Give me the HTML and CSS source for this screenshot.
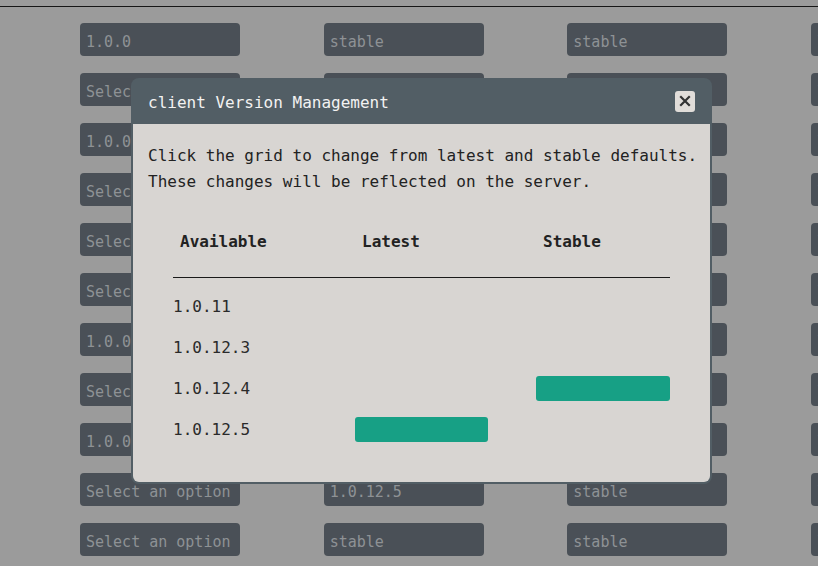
FILE: index.html
```html
<!DOCTYPE html>
<html lang="en">
<head>
<meta charset="utf-8">
<title>client Version Management</title>
<link rel="stylesheet" href="styles.css">
</head>
<body>
<div class="topbar"></div>
<div class="fields">
  <div class="field">1.0.0</div><div class="field">stable</div><div class="field">stable</div><div class="field">latest</div>
  <div class="field">Select an option</div><div class="field">latest</div><div class="field">stable</div><div class="field">latest</div>
  <div class="field">1.0.0</div><div class="field">stable</div><div class="field">stable</div><div class="field">latest</div>
  <div class="field">Select an option</div><div class="field">latest</div><div class="field">stable</div><div class="field">latest</div>
  <div class="field">Select an option</div><div class="field">latest</div><div class="field">stable</div><div class="field">latest</div>
  <div class="field">Select an option</div><div class="field">latest</div><div class="field">stable</div><div class="field">latest</div>
  <div class="field">1.0.0</div><div class="field">stable</div><div class="field">stable</div><div class="field">latest</div>
  <div class="field">Select an option</div><div class="field">latest</div><div class="field">stable</div><div class="field">latest</div>
  <div class="field">1.0.0</div><div class="field">stable</div><div class="field">stable</div><div class="field">latest</div>
  <div class="field">Select an option</div><div class="field">1.0.12.5</div><div class="field">stable</div><div class="field">latest</div>
  <div class="field">Select an option</div><div class="field">stable</div><div class="field">stable</div><div class="field">latest</div>
</div>

<div class="modal">
  <div class="modal-header">
    <span class="modal-title">client Version Management</span>
    <button class="close" aria-label="Close">
      <svg width="12" height="12" viewBox="0 0 12 12"><path d="M2 2 L10 10 M10 2 L2 10" stroke="#333" stroke-width="2.2" stroke-linecap="square"/></svg>
    </button>
  </div>
  <div class="modal-body">
    <p class="intro">Click the grid to change from latest and stable defaults.<br>These changes will be reflected on the server.</p>
    <div class="vtable">
      <div class="th">Available</div><div class="th">Latest</div><div class="th">Stable</div>
      <div class="rows">
        <div class="td">1.0.11</div><div class="td"></div><div class="td"></div>
        <div class="td">1.0.12.3</div><div class="td"></div><div class="td"></div>
        <div class="td">1.0.12.4</div><div class="td"></div><div class="td"><span class="bar bar-wide"></span></div>
        <div class="td">1.0.12.5</div><div class="td"><span class="bar"></span></div><div class="td"></div>
      </div>
    </div>
  </div>
</div>
</body>
</html>
```
FILE: styles.css
```css
html, body {
  margin: 0;
  padding: 0;
}
body {
  background: #9b9b9b;
  width: 818px;
  height: 566px;
  overflow: hidden;
  font-family: "DejaVu Sans Mono", "Liberation Mono", monospace;
}
.topbar {
  height: 6px;
  border-bottom: 1px solid #161616;
}
.fields {
  display: grid;
  grid-template-columns: repeat(4, 160px);
  column-gap: 83.67px;
  row-gap: 17px;
  padding: 16px 0 0 80px;
  width: 738px;
  overflow: hidden;
}
.field {
  height: 33px;
  background: #4a5057;
  border-radius: 4px;
  color: #8e9295;
  font-size: 15px;
  line-height: 38px;
  padding-left: 6px;
  white-space: nowrap;
  overflow: hidden;
}
.modal {
  position: fixed;
  left: 131px;
  top: 78px;
  width: 577px;
  background: #525e65;
  border-radius: 8px;
  padding: 0 2px 2px 2px;
}
.modal-header {
  height: 46px;
  display: flex;
  align-items: center;
  justify-content: space-between;
  padding: 0 15px 0 15px;
}
.modal-title {
  color: #f2f2f2;
  font-size: 16px;
  padding-top: 2px;
}
.close {
  width: 20px;
  height: 21px;
  padding: 0;
  border: none;
  border-radius: 3px;
  background: #e1ddd9;
  display: flex;
  align-items: center;
  justify-content: center;
}
.modal-body {
  background: #d8d5d2;
  border-radius: 0 0 6px 6px;
  padding: 19px 15px 32px 15px;
  color: #222;
}
.intro {
  margin: 0;
  font-size: 16px;
  line-height: 26px;
  white-space: nowrap;
}
.vtable {
  margin: 35px 0 0 25px;
  width: 497px;
  display: grid;
  grid-template-columns: 182px 181px 134px;
}
.th {
  font-weight: bold;
  font-size: 16px;
  line-height: 24px;
  padding: 0 0 23px 7px;
  border-bottom: 1px solid #1a1a1a;
  color: #222;
}
.rows {
  grid-column: 1 / -1;
  display: grid;
  grid-template-columns: 182px 181px 134px;
  padding-top: 8px;
}
.td {
  height: 41px;
  display: flex;
  align-items: center;
  font-size: 16px;
  color: #2a2a2a;
}
.bar {
  display: block;
  width: 133px;
  height: 25px;
  border-radius: 3px;
  background: #17a085;
}
.bar-wide {
  width: 134px;
}
```
